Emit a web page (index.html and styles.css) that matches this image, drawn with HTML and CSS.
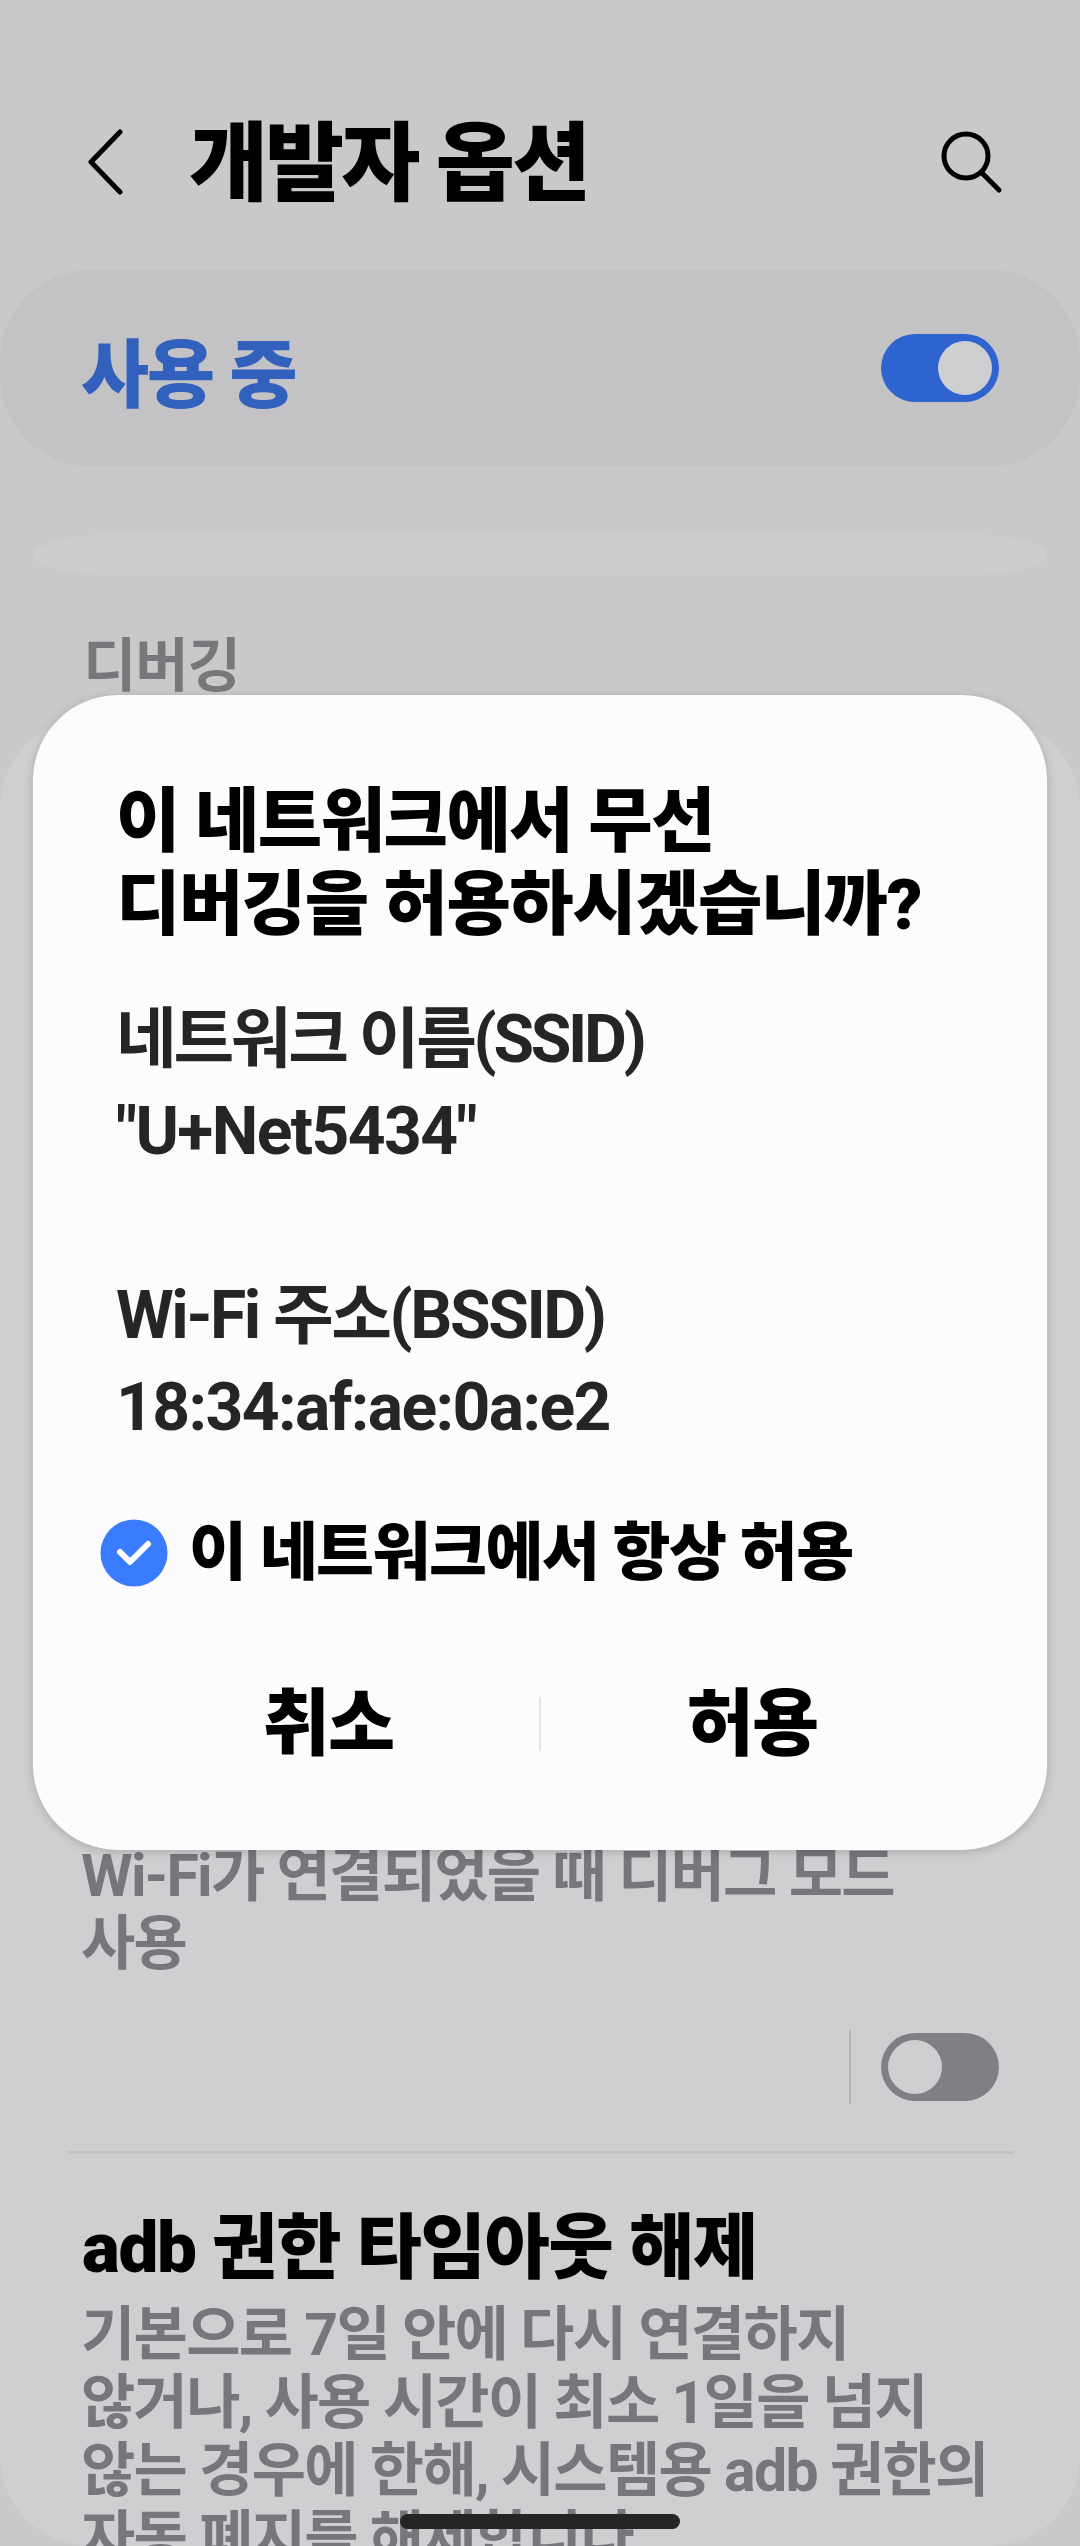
FILE: index.html
```html
<!DOCTYPE html>
<html lang="ko">
<head>
<meta charset="UTF-8" />
<meta name="viewport" content="width=device-width, initial-scale=1" />
<title>개발자 옵션</title>
<link rel="stylesheet" href="styles.css">
</head>
<body>

<div class="screen">
  <div class="appbar">
    <svg class="icon-back" viewBox="0 0 38 66" width="38" height="66"><path d="M34 3 L5 33 L34 63" /></svg>
    <h1 class="appbar-title">개발자 옵션</h1>
    <svg class="icon-search" viewBox="0 0 64 64" width="64" height="64"><circle cx="27" cy="26" r="22" /><path d="M43 43 L60 60" /></svg>
  </div>

  <div class="master">
    <span class="master-label">사용 중</span>
    <span class="switch switch-on"><span class="knob"></span></span>
  </div>

  <div class="strip"></div>

  <div class="section-label">디버깅</div>

  <div class="card">
    <div class="row-desc row-first">Wi-Fi가 연결되었을 때 디버그 모드<br>사용</div>
    <div class="row-actions">
      <span class="row-sep"></span>
      <span class="switch switch-off"><span class="knob"></span></span>
    </div>
    <hr class="row-line">
    <div class="row-title">adb 권한 타임아웃 해제</div>
    <div class="row-desc">기본으로 7일 안에 다시 연결하지<br>않거나, 사용 시간이 최소 1일을 넘지<br>않는 경우에 한해, 시스템용 adb 권한의<br>자동 폐지를 해제합니다</div>
  </div>

  <div class="dialog">
    <h2 class="dialog-title">이 네트워크에서 무선<br>디버깅을 허용하시겠습니까?</h2>
    <div class="dialog-body">
      <div class="body-line line-ssid">네트워크 이름(SSID)</div>
      <div class="body-line">"U+Net5434"</div>
      <div class="body-line line-bssid">Wi-Fi 주소(BSSID)</div>
      <div class="body-line">18:34:af:ae:0a:e2</div>
    </div>
    <div class="check-row">
      <svg class="check" viewBox="0 0 68 68" width="68" height="68"><circle cx="34" cy="34" r="33.5" /><path d="M20 33 L30 43 L48 25" /></svg>
      <span class="check-label">이 네트워크에서 항상 허용</span>
    </div>
    <div class="dialog-buttons">
      <span class="dialog-btn">취소</span>
      <span class="btn-sep"></span>
      <span class="dialog-btn">허용</span>
    </div>
  </div>

  <div class="home-pill"></div>
</div>

</body>
</html>
```

FILE: styles.css
```css
html, body { margin: 0; padding: 0; background: #c9c9c9; }
.screen { position: relative; width: 1080px; height: 2546px; overflow: hidden; background: #c9c9c9; font-family: Roboto, "Noto Sans CJK KR", sans-serif; font-weight: 700; }

.appbar { display: flex; align-items: center; height: 270px; padding: 54px 77px 0 86px; box-sizing: border-box; }
.icon-back { flex: none; }
.icon-back path { fill: none; stroke: #000; stroke-width: 5; stroke-linecap: round; stroke-linejoin: round; }
.appbar-title { margin: 6px 0 0 65px; flex: 1; font-size: 86px; line-height: 100px; font-weight: 900; color: #000; letter-spacing: -3px; }
.icon-search { flex: none; }
.icon-search circle, .icon-search path { fill: none; stroke: #000; stroke-width: 5; stroke-linecap: round; }

.master { display: flex; align-items: center; justify-content: space-between; height: 196px; padding: 0 81px; box-sizing: border-box; background: #c3c3c5; border-radius: 90px; }
.master-label { font-size: 74px; font-weight: 900; color: #3160bd; letter-spacing: -2px; }

.switch { display: block; position: relative; width: 118px; height: 68px; border-radius: 34px; }
.switch-on { background: #2f64d0; }
.switch-off { background: #808084; }
.knob { position: absolute; top: 7px; width: 54px; height: 54px; border-radius: 50%; background: #cfcfd1; }
.switch-on .knob { right: 7px; }
.switch-off .knob { left: 7px; }

.strip { height: 42px; margin: 68px 33px 0; background: #cdcdcf; border-radius: 90px / 21px; }

.section-label { margin: 55px 0 0 83px; font-size: 58px; line-height: 70px; color: #78787c; letter-spacing: -1px; }

.card { position: relative; margin-top: 17px; height: 1828px; padding: 0 81px 0 66px; box-sizing: border-box; background: #cfcfd1; border-radius: 90px; }

.row-desc { margin-left: 15px; font-size: 59px; line-height: 68px; color: #77777b; letter-spacing: -1.7px; white-space: nowrap; }
.row-first { padding-top: 1124px; }
.row-actions { display: flex; align-items: center; justify-content: flex-end; margin: 52px 0 0; gap: 30px; }
.row-sep { width: 2px; height: 74px; background: #b4b4b6; }
.row-line { height: 3px; margin: 47px -15px 0 1px; border: 0; background: #c3c3c5; }
.row-title { margin: 54px 0 13px 16px; font-size: 71px; line-height: 80px; font-weight: 900; color: #000; letter-spacing: -1.3px; white-space: nowrap; }

.dialog { position: absolute; left: 33px; top: 695px; width: 1014px; height: 1155px; box-sizing: border-box; padding: 86px 0 0 83px; background: #fcfcfe; border-radius: 85px; box-shadow: 0 2px 10px rgba(0, 0, 0, 0.18); }
.dialog-title { margin: 0; font-size: 70px; line-height: 83px; font-weight: 900; color: #000; letter-spacing: -1.5px; white-space: nowrap; }
.dialog-body { margin: 47px 0 0; color: #252528; white-space: nowrap; }
.body-line { font-size: 66px; line-height: 92px; letter-spacing: -1.6px; }
.line-ssid { letter-spacing: -3.3px; }
.line-bssid { margin-top: 92px; letter-spacing: -2.4px; }
.check-row { display: flex; align-items: center; gap: 21px; margin: 64px 0 0 -16px; }
.check { flex: none; }
.check circle { fill: #3a7cff; }
.check path { fill: none; stroke: #fff; stroke-width: 6; stroke-linecap: round; stroke-linejoin: round; }
.check-label { font-size: 63px; line-height: 70px; font-weight: 900; color: #000; letter-spacing: -1.5px; white-space: nowrap; }
.dialog-buttons { display: flex; align-items: center; margin: 91px 0 0 -83px; width: 1014px; padding: 0 84px; box-sizing: border-box; }
.dialog-btn { flex: 1; text-align: center; font-size: 73px; line-height: 90px; font-weight: 900; color: #000; letter-spacing: -2px; }
.btn-sep { flex: none; width: 2px; height: 54px; background: #e6e6e8; }

.home-pill { position: absolute; left: 400px; top: 2514px; width: 280px; height: 15px; border-radius: 8px; background: #252525; }
```
